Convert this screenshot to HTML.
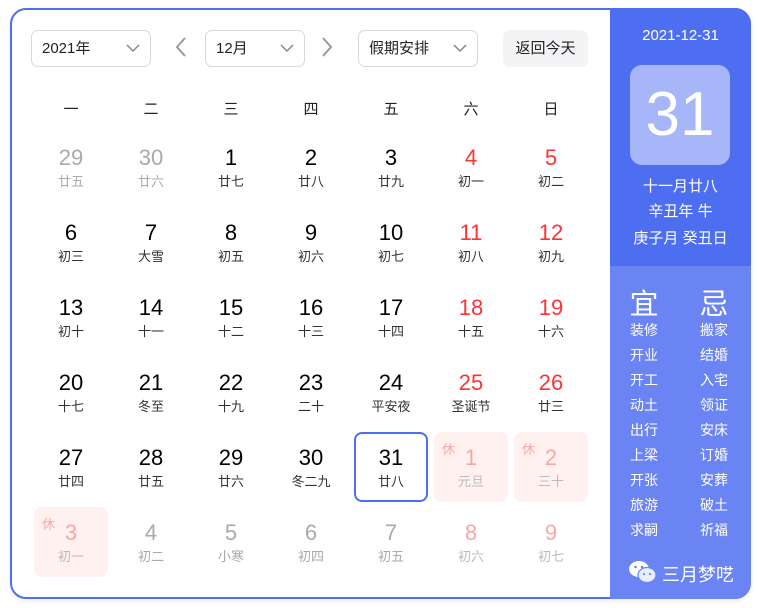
<!DOCTYPE html>
<html><head><meta charset="utf-8"><style>
*{margin:0;padding:0;box-sizing:border-box}
body{width:759px;height:608px;background:#fff;font-family:"Liberation Sans","Noto Sans CJK SC",sans-serif;position:relative;overflow:hidden}
.box{position:absolute;left:10px;top:8px;width:741px;height:591px;border:2px solid #4e6ef2;border-radius:16px;overflow:hidden;box-shadow:0 2px 6px rgba(0,0,0,.08)}
.sel{position:absolute;top:30px;height:37px;border:1px solid #d7d8e0;border-radius:7px;font-size:15px;color:#222;line-height:35px;padding-left:10px}
.sel svg{position:absolute;right:10px;top:13px}
.arr{position:absolute;top:37px}
.btn{position:absolute;left:503px;top:30px;width:85px;height:37px;background:#f4f4f6;border-radius:7px;font-size:15px;color:#222;line-height:37px;text-align:center}
.wk{position:absolute;top:98px;width:80px;text-align:center;font-size:15px;color:#222}
.c{position:absolute;width:74px;height:70px;text-align:center;border-radius:8px}
.c .n{position:absolute;left:0;right:0;top:14px;font-size:22px;line-height:24px;color:#000}
.c .l{position:absolute;left:0;right:0;top:42px;font-size:13px;line-height:16px;color:#333}
.c.g .n{color:#aaa}.c.g .l{color:#aaa}
.c.r .n{color:#f33}
.c.h{background:#fef1f0}.c.h .n{color:#fba6a6}.c.h .l{color:#bbb}
.c.h .x{position:absolute;left:8px;top:7px;font-size:13px;color:#fba6a6}
.c.gr .n{color:#fba6a6}.c.gr .l{color:#bbb}
.c.sel2{border:2px solid #4e6ef2}
.rp{position:absolute;left:610px;top:8px;width:141px;height:258px;background:#4e6ef2;border-radius:0 16px 0 0;color:#fff;text-align:center}
.rp2{position:absolute;left:610px;top:266px;width:141px;height:333px;background:#6b84f3;border-radius:0 0 16px 0;color:#fff}
.big{position:absolute;left:20px;top:57px;width:100px;height:100px;background:#a7b6f9;border-radius:12px;font-size:62px;line-height:100px}
.t{position:absolute;left:0;right:0;font-size:15px}
.yj{position:absolute;width:60px;text-align:center}
</style></head><body>
<div class="box"></div>
<div class="sel" style="left:31px;width:120px">2021年<svg width="14" height="9" viewBox="0 0 14 9"><path d="M1 1l6 6 6-6" fill="none" stroke="#888" stroke-width="1.5"/></svg></div>
<svg class="arr" style="left:175px" width="12" height="20" viewBox="0 0 12 20"><path d="M10 1L2 10l8 9" fill="none" stroke="#999" stroke-width="2"/></svg>
<div class="sel" style="left:205px;width:100px">12月<svg width="14" height="9" viewBox="0 0 14 9"><path d="M1 1l6 6 6-6" fill="none" stroke="#888" stroke-width="1.5"/></svg></div>
<svg class="arr" style="left:321px" width="12" height="20" viewBox="0 0 12 20"><path d="M2 1l8 9-8 9" fill="none" stroke="#999" stroke-width="2"/></svg>
<div class="sel" style="left:358px;width:120px">假期安排<svg width="14" height="9" viewBox="0 0 14 9"><path d="M1 1l6 6 6-6" fill="none" stroke="#888" stroke-width="1.5"/></svg></div>
<div class="btn">返回今天</div>
<div class="wk" style="left:31px">一</div><div class="wk" style="left:111px">二</div><div class="wk" style="left:191px">三</div><div class="wk" style="left:271px">四</div><div class="wk" style="left:351px">五</div><div class="wk" style="left:431px">六</div><div class="wk" style="left:511px">日</div>

<div class="c g" style="left:34px;top:132px"><div class="n">29</div><div class="l">廿五</div></div>
<div class="c g" style="left:114px;top:132px"><div class="n">30</div><div class="l">廿六</div></div>
<div class="c" style="left:194px;top:132px"><div class="n">1</div><div class="l">廿七</div></div>
<div class="c" style="left:274px;top:132px"><div class="n">2</div><div class="l">廿八</div></div>
<div class="c" style="left:354px;top:132px"><div class="n">3</div><div class="l">廿九</div></div>
<div class="c r" style="left:434px;top:132px"><div class="n">4</div><div class="l">初一</div></div>
<div class="c r" style="left:514px;top:132px"><div class="n">5</div><div class="l">初二</div></div>

<div class="c" style="left:34px;top:207px"><div class="n">6</div><div class="l">初三</div></div>
<div class="c" style="left:114px;top:207px"><div class="n">7</div><div class="l">大雪</div></div>
<div class="c" style="left:194px;top:207px"><div class="n">8</div><div class="l">初五</div></div>
<div class="c" style="left:274px;top:207px"><div class="n">9</div><div class="l">初六</div></div>
<div class="c" style="left:354px;top:207px"><div class="n">10</div><div class="l">初七</div></div>
<div class="c r" style="left:434px;top:207px"><div class="n">11</div><div class="l">初八</div></div>
<div class="c r" style="left:514px;top:207px"><div class="n">12</div><div class="l">初九</div></div>

<div class="c" style="left:34px;top:282px"><div class="n">13</div><div class="l">初十</div></div>
<div class="c" style="left:114px;top:282px"><div class="n">14</div><div class="l">十一</div></div>
<div class="c" style="left:194px;top:282px"><div class="n">15</div><div class="l">十二</div></div>
<div class="c" style="left:274px;top:282px"><div class="n">16</div><div class="l">十三</div></div>
<div class="c" style="left:354px;top:282px"><div class="n">17</div><div class="l">十四</div></div>
<div class="c r" style="left:434px;top:282px"><div class="n">18</div><div class="l">十五</div></div>
<div class="c r" style="left:514px;top:282px"><div class="n">19</div><div class="l">十六</div></div>

<div class="c" style="left:34px;top:357px"><div class="n">20</div><div class="l">十七</div></div>
<div class="c" style="left:114px;top:357px"><div class="n">21</div><div class="l">冬至</div></div>
<div class="c" style="left:194px;top:357px"><div class="n">22</div><div class="l">十九</div></div>
<div class="c" style="left:274px;top:357px"><div class="n">23</div><div class="l">二十</div></div>
<div class="c" style="left:354px;top:357px"><div class="n">24</div><div class="l">平安夜</div></div>
<div class="c r" style="left:434px;top:357px"><div class="n">25</div><div class="l">圣诞节</div></div>
<div class="c r" style="left:514px;top:357px"><div class="n">26</div><div class="l">廿三</div></div>

<div class="c" style="left:34px;top:432px"><div class="n">27</div><div class="l">廿四</div></div>
<div class="c" style="left:114px;top:432px"><div class="n">28</div><div class="l">廿五</div></div>
<div class="c" style="left:194px;top:432px"><div class="n">29</div><div class="l">廿六</div></div>
<div class="c" style="left:274px;top:432px"><div class="n">30</div><div class="l">冬二九</div></div>
<div class="c sel2" style="left:354px;top:432px"><div class="n" style="top:12px">31</div><div class="l" style="top:40px">廿八</div></div>
<div class="c h" style="left:434px;top:432px"><div class="x">休</div><div class="n">1</div><div class="l">元旦</div></div>
<div class="c h" style="left:514px;top:432px"><div class="x">休</div><div class="n">2</div><div class="l">三十</div></div>

<div class="c h" style="left:34px;top:507px"><div class="x">休</div><div class="n">3</div><div class="l">初一</div></div>
<div class="c g" style="left:114px;top:507px"><div class="n">4</div><div class="l">初二</div></div>
<div class="c g" style="left:194px;top:507px"><div class="n">5</div><div class="l">小寒</div></div>
<div class="c g" style="left:274px;top:507px"><div class="n">6</div><div class="l">初四</div></div>
<div class="c g" style="left:354px;top:507px"><div class="n">7</div><div class="l">初五</div></div>
<div class="c gr" style="left:434px;top:507px"><div class="n">8</div><div class="l">初六</div></div>
<div class="c gr" style="left:514px;top:507px"><div class="n">9</div><div class="l">初七</div></div>

<div class="rp">
<div class="t" style="top:19px">2021-12-31</div>
<div class="big">31</div>
<div class="t" style="top:167px">十一月廿八</div>
<div class="t" style="top:192px">辛丑年 牛</div>
<div class="t" style="top:219px">庚子月 癸丑日</div>
</div>
<div class="rp2">
<div class="yj" style="left:4px;top:15px;font-size:29px">宜</div>
<div class="yj" style="left:74px;top:15px;font-size:29px">忌</div>
<div class="yj" style="left:4px;top:52px;font-size:14px;line-height:25px">装修<br>开业<br>开工<br>动土<br>出行<br>上梁<br>开张<br>旅游<br>求嗣</div>
<div class="yj" style="left:74px;top:52px;font-size:14px;line-height:25px">搬家<br>结婚<br>入宅<br>领证<br>安床<br>订婚<br>安葬<br>破土<br>祈福</div>
<svg style="position:absolute;left:18px;top:294px" width="30" height="24" viewBox="0 0 30 24"><ellipse cx="11" cy="9" rx="10" ry="8" fill="#fff"/><ellipse cx="19" cy="15" rx="9" ry="7.5" fill="#e8ecff" stroke="#6b84f3" stroke-width="1.2"/><circle cx="7.5" cy="7" r="1.3" fill="#6b84f3"/><circle cx="14" cy="7" r="1.3" fill="#6b84f3"/><circle cx="16" cy="14" r="1.1" fill="#6b84f3"/><circle cx="22" cy="14" r="1.1" fill="#6b84f3"/></svg>
<div style="position:absolute;left:52px;top:295px;font-size:18px">三月梦呓</div>
</div>
</body></html>
